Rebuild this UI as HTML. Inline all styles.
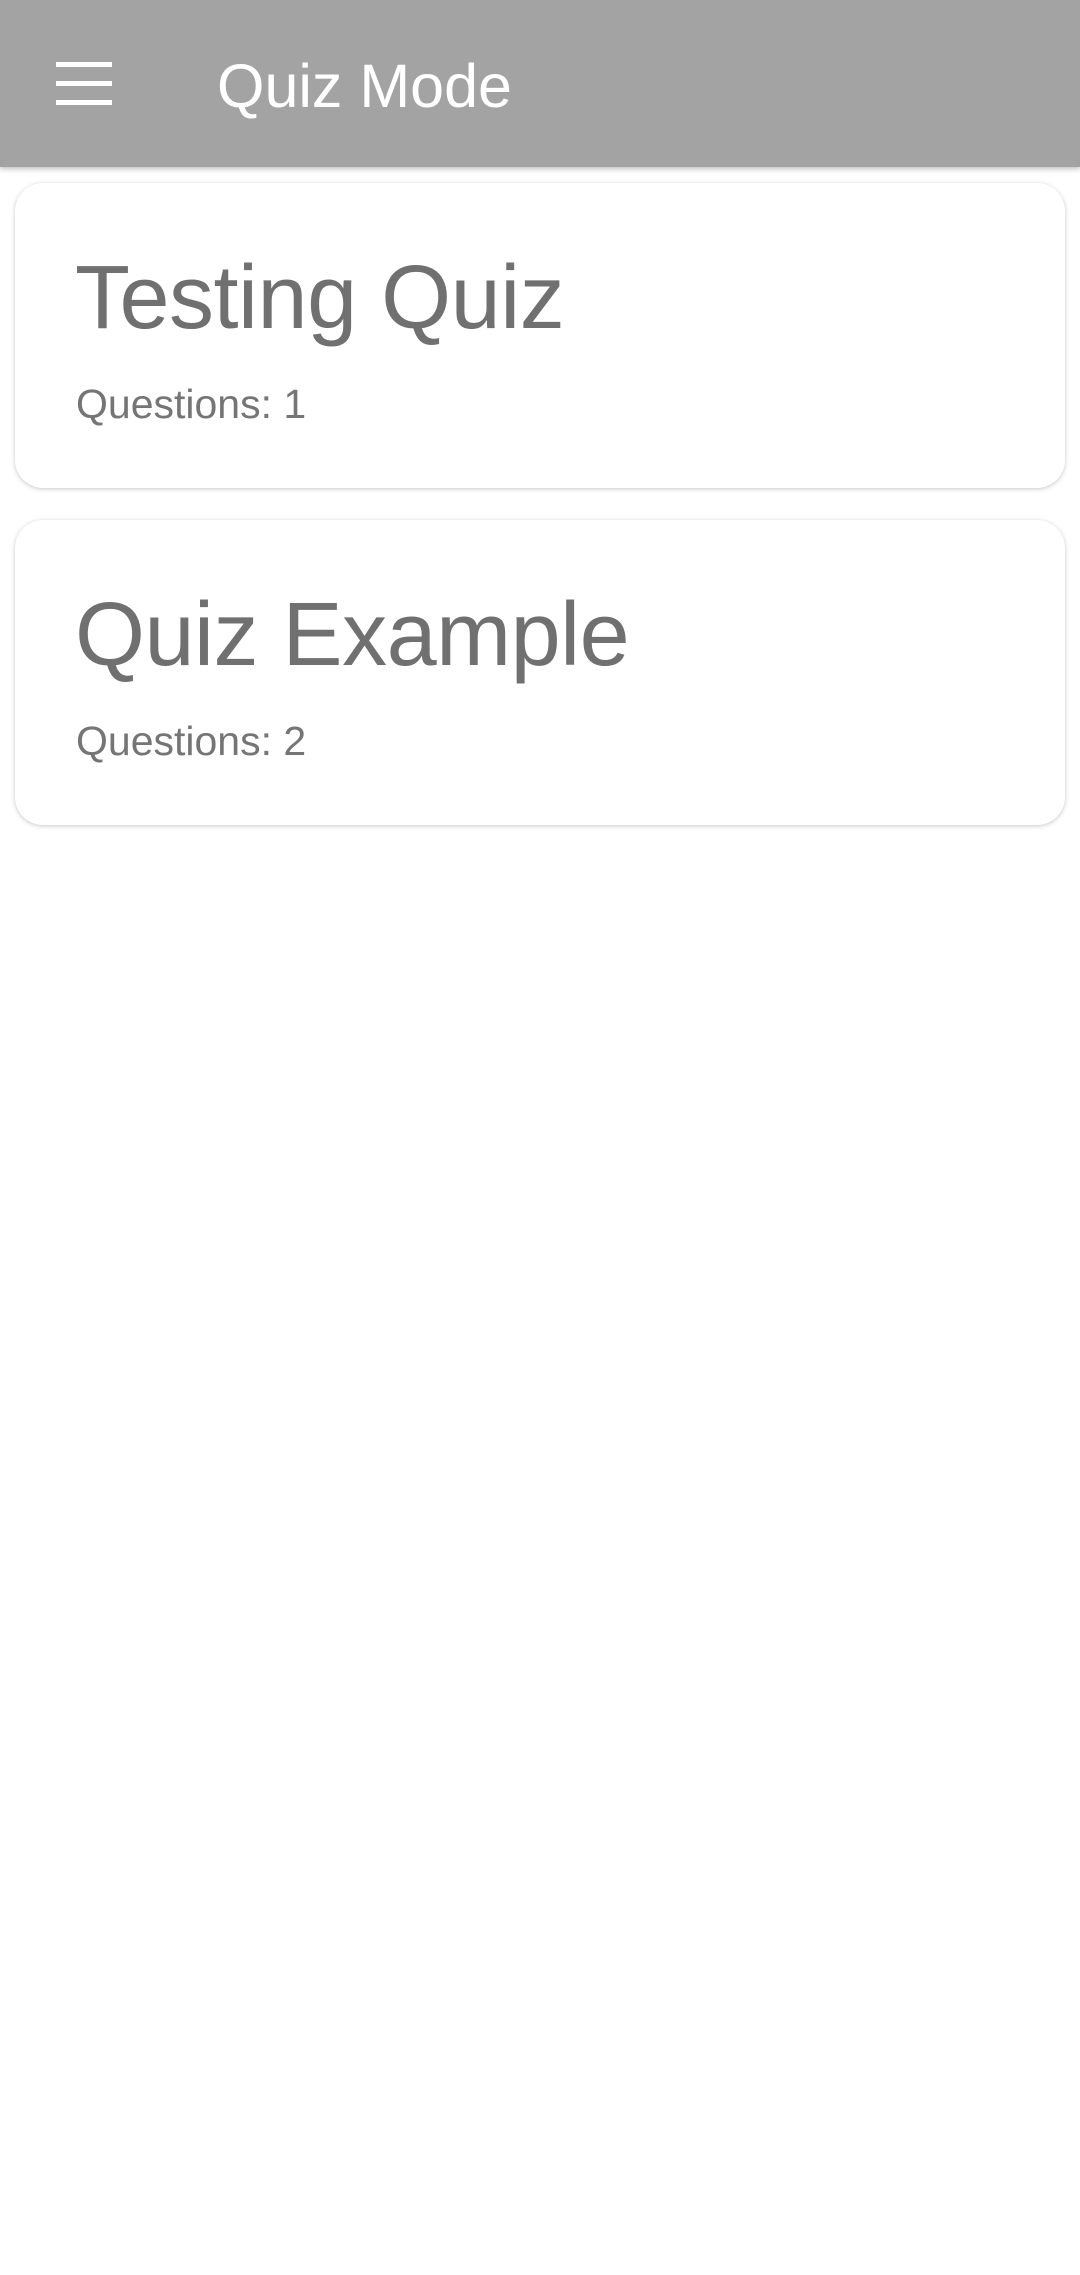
<!DOCTYPE html>
<html><head><meta charset="utf-8">
<style>
html,body{margin:0;padding:0;width:1080px;height:2275px;background:#fff;overflow:hidden;font-family:"Liberation Sans",sans-serif;}
.bar{position:absolute;left:0;top:0;width:1080px;height:167px;background:#a3a3a3;box-shadow:0 2px 5px rgba(0,0,0,0.25);}
.ham{position:absolute;left:56px;width:56px;height:5px;background:#fff;}
.title{position:absolute;left:217px;top:56px;font-size:61px;color:#fff;line-height:1;}
.card{position:absolute;left:15px;width:1050px;height:305px;background:#fff;border-radius:28px;box-shadow:0 1px 5px rgba(0,0,0,0.22);}
.h{position:absolute;left:60px;font-size:90px;color:#707070;line-height:1;letter-spacing:-0.5px;}
.q{position:absolute;left:61px;font-size:41px;color:#757575;line-height:1;}
</style></head><body>
<div class="bar">
<div class="ham" style="top:62px"></div>
<div class="ham" style="top:81px"></div>
<div class="ham" style="top:100px"></div>
<div class="title">Quiz Mode</div>
</div>
<div class="card" style="top:183px">
<div class="h" style="top:70px">Testing Quiz</div>
<div class="q" style="top:201px">Questions: 1</div>
</div>
<div class="card" style="top:520px">
<div class="h" style="top:70px">Quiz Example</div>
<div class="q" style="top:201px">Questions: 2</div>
</div>
</body></html>
